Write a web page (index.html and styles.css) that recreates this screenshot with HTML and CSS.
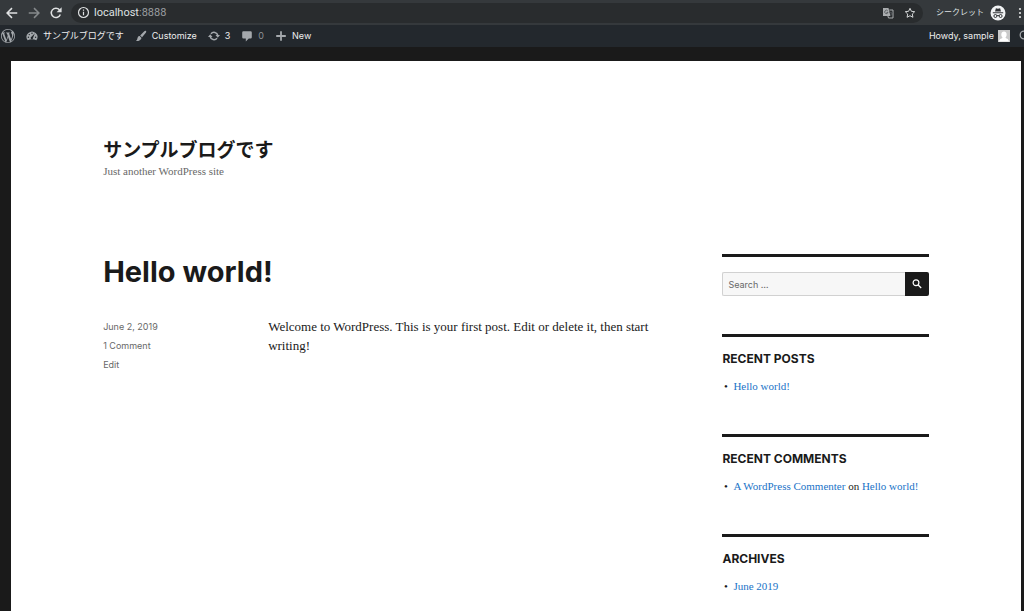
FILE: index.html
```html
<!DOCTYPE html>
<html lang="en">
<head>
<meta charset="utf-8">
<title>サンプルブログです</title>
<meta name="viewport" content="width=device-width, initial-scale=1">
<link rel="stylesheet" href="styles.css">
</head>
<body>
<div class="browser">
  <button class="nav-btn" aria-label="Back"><svg viewBox="0 0 12 12"><path d="M10.500 6H2M6 1.800 1.800 6 6 10.200"/></svg></button>
  <button class="nav-btn dim" aria-label="Forward"><svg viewBox="0 0 12 12"><path d="M1.500 6H10M6 1.800 10.200 6 6 10.200"/></svg></button>
  <button class="nav-btn" aria-label="Reload"><svg viewBox="0 0 12 12"><path d="M9.700 7.300A4 4 0 1 1 9 3.300"/><path d="M10.800 1v4.300H6.500z" fill="currentColor" stroke="none"/></svg></button>
  <div class="address">
    <svg class="info" viewBox="0 0 12 12"><circle cx="6" cy="6" r="4.600"/><path d="M6 5.300v3.200M6 3.200v1.200"/></svg>
    <span class="url">localhost<span class="port">:8888</span></span>
    <button class="addr-btn" aria-label="Translate"><svg viewBox="0 0 12 12"><path d="M1 1h5.500l2 8H1z" fill="#a9acae"/><path d="M7.300 3H11v8H6.500l-.6-2" fill="none" stroke="#a9acae"/><path d="M5.800 4A1.700 1.700 0 1 0 6 5.500H4.500M7.500 5.500h3M9 4.700v.8M10 5.500 8.300 9M8.300 6.500 10 8.500" fill="none" stroke="#4d5154" stroke-width=".8"/></svg></button>
    <button class="addr-btn" aria-label="Bookmark"><svg viewBox="0 0 12 12"><path d="m6 1.300 1.400 3 3.300.4-2.400 2.300.6 3.300L6 8.700l-2.900 1.600.6-3.300L1.300 4.700l3.300-.4z" fill="none" stroke="#d5d7d8"/></svg></button>
  </div>
  <div class="profile">
    <span>シークレット</span>
    <svg class="incognito" viewBox="0 0 16 16"><circle cx="8" cy="8" r="7.500" fill="#f1f3f4"/><path d="M5 6.500 5.900 3.200 8 3.700l2.100-.5.900 3.300zM2.800 7.200h10.400v1H2.800z" fill="#303336"/><path d="M7 10.800q1-.7 2 0" fill="none" stroke="#303336"/><circle cx="5.400" cy="11" r="1.500" fill="none" stroke="#303336"/><circle cx="10.600" cy="11" r="1.500" fill="none" stroke="#303336"/></svg>
  </div>
  <button class="menu-btn" aria-label="Menu"><svg viewBox="0 0 4 12"><circle cx="2" cy="2" r="1.100"/><circle cx="2" cy="6" r="1.100"/><circle cx="2" cy="10" r="1.100"/></svg></button>
</div>

<nav class="adminbar" aria-label="Toolbar">
  <a class="wp" href="#" aria-label="About WordPress"><svg viewBox="0 0 20 20"><path d="M20 10c0-5.510-4.490-10-10-10S0 4.490 0 10s4.490 10 10 10 10-4.490 10-10zM7.780 15.370 4.370 6.220c.55-.02 1.170-.08 1.170-.08.5-.06.44-1.130-.06-1.110 0 0-1.450.11-2.370.11-.18 0-.37 0-.58-.01C4.120 2.690 6.870 1.110 10 1.110c2.330 0 4.450.87 6.050 2.340-.68-.11-1.650.39-1.650 1.580 0 .74.450 1.360.9 2.100.35.610.55 1.360.55 2.460 0 1.490-1.400 5-1.400 5l-3.030-8.370c.54-.02.82-.17.82-.17.5-.05.44-1.250-.06-1.220 0 0-1.440.12-2.380.12-.87 0-2.330-.12-2.330-.12-.5-.03-.56 1.200-.06 1.220l.92.08 1.260 3.410zM17.410 10c.24-.64.740-1.870.430-4.250.7 1.290 1.050 2.710 1.050 4.250 0 3.290-1.730 6.240-4.400 7.780.97-2.590 1.940-5.200 2.920-7.780zM6.100 18.090C3.120 16.650 1.110 13.530 1.110 10c0-1.300.23-2.480.72-3.590C3.250 10.300 4.670 14.200 6.100 18.090zm4.030-6.630 2.580 6.980c-.86.29-1.760.45-2.710.45-.79 0-1.570-.11-2.290-.33.810-2.380 1.620-4.740 2.420-7.100z"/></svg></a>
  <a href="#"><svg viewBox="0 0 20 20"><path d="M2.700 17A9 9 0 1 1 17.300 17Q10 14 2.700 17z"/><g fill="#23282d"><circle cx="10" cy="5.500" r="1.200"/><circle cx="5.500" cy="7.700" r="1.200"/><circle cx="4" cy="12" r="1.200"/><circle cx="16" cy="12" r="1.200"/><path d="m14.800 5.600-3 7.200a2 2 0 1 1-2.700-1.600z"/></g></svg>サンプルブログです</a>
  <a href="#"><svg viewBox="0 0 20 20"><path d="M18.300 1.700c.9.800.5 1.800-.3 2.900l-6.200 7.600-3.200-3L15.500 2.200c1-.9 2-1.200 2.800-.5zM7.700 10.200l3.200 3c-1 3.600-4.800 5.600-9.500 5.100 2.700-1.700 2-3.700 3.100-6 .7-1.400 2-2 3.200-2.100z"/></svg>Customize</a>
  <a href="#" aria-label="3 updates"><svg viewBox="0 0 20 20"><path d="M5 6.500a6.300 6.300 0 0 1 11.300 2.500M15 13.500A6.300 6.300 0 0 1 3.700 11" fill="none" stroke="currentColor" stroke-width="2.600"/><path d="M12.500 8.500H20L16.300 13zM0 11.500h7.500L3.700 7z"/></svg>3</a>
  <a class="zero" href="#" aria-label="0 comments"><svg viewBox="0 0 20 20"><path d="M4 2h12q2 0 2 2v8q0 2-2 2h-3l-5 5v-5H4q-2 0-2-2V4q0-2 2-2z"/></svg>0</a>
  <a href="#"><svg viewBox="0 0 20 20"><path d="M8.500 2h3v6.500H18v3h-6.500V18h-3v-6.500H2v-3h6.500z"/></svg>New</a>
  <a class="account" href="#">Howdy, sample<svg viewBox="0 0 12 12"><path d="M0 0h12v12H0z" fill="#c9c9c9"/><path d="M6 1.500c3.300 0 3.200 4.500 1.500 6 .3 1.200 3 .8 3.500 3.900H1c.5-3.100 3.200-2.700 3.500-3.900C2.800 6 2.700 1.500 6 1.500z" fill="#fff"/></svg></a>
  <a class="find" href="#" aria-label="Search"><svg viewBox="0 0 12 12"><circle cx="5" cy="5" r="3.800" fill="none" stroke="currentColor" stroke-width="1.300"/><path d="m7.800 7.800 3 3" stroke="currentColor"/></svg></a>
</nav>

<div class="site">
  <header class="masthead">
    <p class="site-title"><a href="#">サンプルブログです</a></p>
    <p class="tagline">Just another WordPress site</p>
  </header>
  <div class="columns">
    <main>
      <article>
        <h1><a href="#">Hello world!</a></h1>
        <div class="entry">
          <div class="meta"><a href="#">June 2, 2019</a><a href="#">1 Comment</a><a href="#">Edit</a></div>
          <p class="body-text">Welcome to WordPress. This is your first post. Edit or delete it, then start writing!</p>
        </div>
      </article>
    </main>
    <aside>
      <section class="widget">
        <form class="search">
          <input type="search" placeholder="Search …" aria-label="Search for:">
          <button type="button" aria-label="Search"><svg viewBox="0 0 12 12"><circle cx="5" cy="4.800" r="2.900"/><path d="m7.200 7 3 3"/></svg></button>
        </form>
      </section>
      <section class="widget">
        <h2>RECENT POSTS</h2>
        <ul><li><a href="#">Hello world!</a></li></ul>
      </section>
      <section class="widget">
        <h2>RECENT COMMENTS</h2>
        <ul><li><a href="#">A WordPress Commenter</a> on <a href="#">Hello world!</a></li></ul>
      </section>
      <section class="widget">
        <h2>ARCHIVES</h2>
        <ul><li><a href="#">June 2019</a></li></ul>
      </section>
    </aside>
  </div>
</div>
</body>
</html>
```
FILE: styles.css
```css
* { box-sizing: border-box; }
body {
  margin: 0;
  background: #1a1a1a;
  color: #1a1a1a;
  font-family: "Liberation Serif", "Noto Sans CJK JP", serif;
  overflow-x: hidden;
}
a { color: inherit; text-decoration: none; }
button { border: 0; padding: 0; background: none; color: inherit; }
svg { display: block; flex: none; }
h1, h2, p, ul { margin: 0; padding: 0; }

.browser {
  display: flex;
  align-items: center;
  height: 25px;
  padding: 0 2px 0 5px;
  background: #35393c;
  color: #dfe1e2;
  font: 11px/24px Roboto, "Noto Sans CJK JP", sans-serif;
}
.nav-btn { width: 14px; margin-right: 8px; }
.nav-btn svg { width: 14px; height: 14px; fill: none; stroke: currentColor; stroke-width: 1.3; }
.dim { color: #85898b; }
.address {
  flex: 1;
  display: flex;
  align-items: center;
  height: 20px;
  padding: 0 7px 0 6px;
  border-radius: 10px;
  background: #292c2e;
}
.info { width: 13px; height: 13px; fill: none; stroke: currentColor; stroke-width: 1.1; }
.url { flex: 1; margin-left: 4px; font-size: 11px; }
.port { color: #9a9da0; }
.addr-btn { margin-left: 10px; }
.addr-btn svg { width: 12px; height: 12px; }
.profile { display: flex; align-items: center; gap: 6px; margin-left: 13px; font-size: 8px; }
.incognito { width: 16px; height: 16px; }
.menu-btn { margin-left: 12px; }
.menu-btn svg { width: 4px; height: 12px; fill: currentColor; }

.adminbar {
  display: flex;
  align-items: center;
  gap: 11px;
  height: 22px;
  padding-left: 1px;
  background: #23282d;
  color: #eee;
  font: 9px/22px Inter, "Noto Sans CJK JP", sans-serif;
  white-space: nowrap;
}
.adminbar a { display: flex; align-items: center; gap: 5px; }
.adminbar svg { width: 12px; height: 12px; fill: currentColor; color: #a4a8ac; }
.adminbar .wp svg { width: 14px; height: 14px; }
.adminbar .zero { color: #8c9094; }
.adminbar .account { margin-left: auto; gap: 4px; }
.adminbar .find { width: 5px; overflow: hidden; margin-left: -2px; }

.site {
  margin: 14px 3px 0 11px;
  padding: 76px 9% 0;
  background: #fff;
}
.site-title { font: bold 19px/24px "Noto Sans CJK JP", sans-serif; }
.tagline { margin-top: 2px; color: #686868; font-size: 11px; line-height: 17px; }
.columns { display: flex; justify-content: space-between; margin-top: 74px; }
main { width: 68%; }
h1 { font: bold 29px/35px Inter, sans-serif; }
.entry { display: flex; margin-top: 28px; }
.meta {
  flex: 0 0 165px;
  display: flex;
  flex-direction: column;
  color: #686868;
  font: 9px/19px Inter, sans-serif;
}
.body-text { flex: 1; font-size: 13px; line-height: 19px; }

aside { width: 25%; }
.widget { margin-bottom: 38px; padding-top: 15px; border-top: 3px solid #1a1a1a; }
.widget h2 { margin-bottom: 12px; font: bold 12px/13px Inter, sans-serif; }
.widget ul { padding-left: 11px; list-style-type: "•  "; font-size: 11px; line-height: 19px; }
.widget li a { color: #1a73c7; }
.search { display: flex; height: 24px; }
.search input {
  flex: 1;
  min-width: 0;
  padding: 0 5px;
  border: 1px solid #d1d1d1;
  border-right: 0;
  border-radius: 2px 0 0 2px;
  background: #f7f7f7;
  font: 9px Inter, sans-serif;
}
.search input::placeholder { color: #686868; }
.search button { display: grid; place-items: center; width: 24px; border-radius: 0 2px 2px 0; background: #1a1a1a; color: #fff; }
.search svg { width: 12px; height: 12px; fill: none; stroke: currentColor; stroke-width: 1.2; }
```
